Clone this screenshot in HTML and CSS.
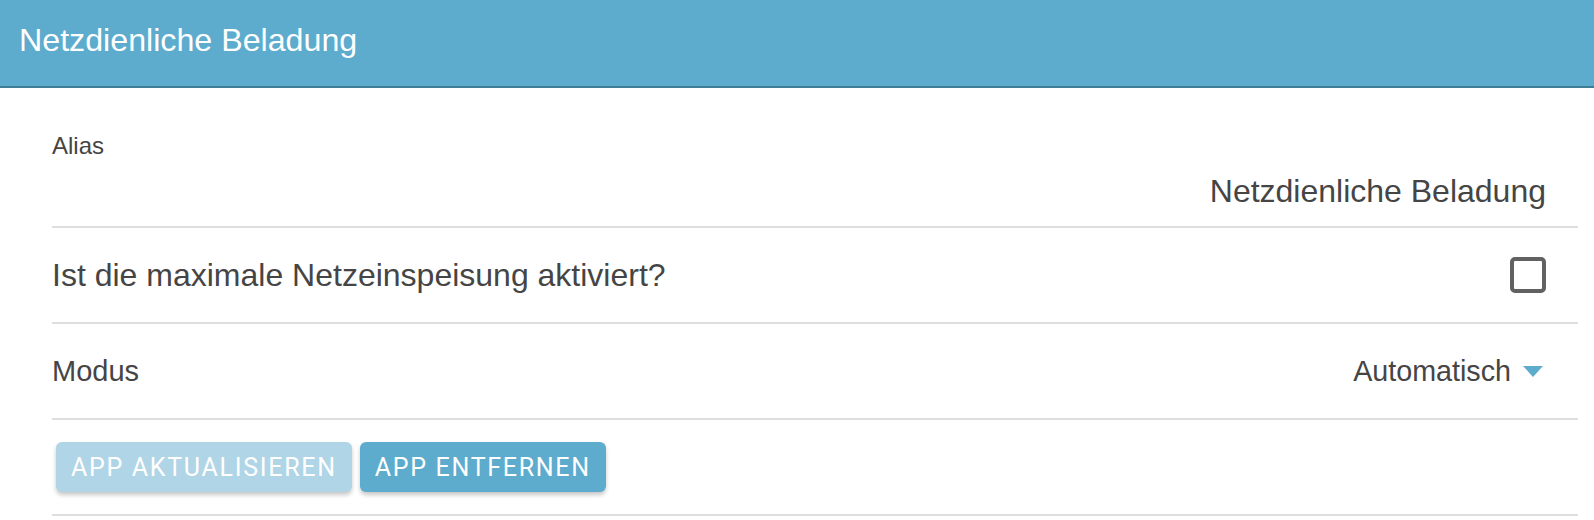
FILE: index.html
```html
<!DOCTYPE html>
<html lang="de">
<head>
    <meta charset="UTF-8">
    <meta name="viewport" content="width=device-width, initial-scale=1.0">
    <title>Netzdienliche Beladung</title>
    <link rel="stylesheet" href="styles.css">
</head>
<body>
    <header class="toolbar">
        <h1 class="toolbar-title">Netzdienliche Beladung</h1>
    </header>

    <div class="list">
        <div class="item item-stacked">
            <label class="item-label" for="alias">Alias</label>
            <input class="item-input" type="text" id="alias" name="alias" value="Netzdienliche Beladung">
        </div>

        <div class="item">
            <span class="item-text item-text-large">Ist die maximale Netzeinspeisung aktiviert?</span>
            <span class="checkbox"></span>
        </div>

        <div class="item">
            <span class="item-text">Modus</span>
            <div class="select">
                <span class="select-value">Automatisch</span>
                <span class="select-arrow"></span>
            </div>
        </div>

        <div class="item item-buttons">
            <button class="btn btn-disabled" type="button">App aktualisieren</button>
            <button class="btn" type="button">App entfernen</button>
        </div>
    </div>
</body>
</html>
```

FILE: styles.css
```css
body {
    margin: 0;
    padding: 0;
    background: #fff;
    font-family: "Liberation Sans", Arial, sans-serif;
    color: #454545;
}

.toolbar {
    height: 88px;
    box-sizing: border-box;
    background-color: #5dabcd;
    border-bottom: 2px solid #3f7d96;
    padding: 22px 19px 0;
}

.toolbar-title {
    margin: 0;
    font-size: 32.2px;
    font-weight: normal;
    line-height: 36px;
    color: #fff;
}

.list {
    margin: 0 16px 0 52px;
}

.item {
    display: flex;
    align-items: center;
    justify-content: space-between;
    min-height: 94px;
    padding-right: 32px;
    border-bottom: 2px solid #dedede;
}

.item-stacked {
    flex-direction: column;
    align-items: stretch;
    justify-content: flex-start;
    min-height: 0;
    padding-top: 44px;
    padding-bottom: 15px;
}

.item-label {
    font-size: 24px;
    line-height: 28px;
    margin-bottom: 11px;
}

.item-input {
    height: 40px;
    border: none;
    outline: none;
    padding: 0;
    font-family: inherit;
    font-size: 32px;
    line-height: 40px;
    color: #454545;
    text-align: right;
    background: transparent;
}

.item-text {
    font-size: 29px;
}

.item-text-large {
    font-size: 32px;
}

.checkbox {
    width: 36px;
    height: 36px;
    box-sizing: border-box;
    border: 4px solid #616161;
    border-radius: 5px;
}

.select {
    display: flex;
    align-items: center;
}

.select-value {
    font-size: 28.7px;
}

.select-arrow {
    width: 0;
    height: 0;
    margin-left: 12px;
    margin-right: 3px;
    border-left: 10px solid transparent;
    border-right: 10px solid transparent;
    border-top: 11px solid #5dabcd;
}

.item-buttons {
    justify-content: flex-start;
    gap: 8px;
    padding-left: 4px;
}

.btn {
    height: 50px;
    padding: 0 15px;
    border: none;
    border-radius: 6px;
    background-color: #5dabcd;
    color: #fff;
    font-family: Roboto, "Liberation Sans", sans-serif;
    font-size: 25px;
    font-weight: 400;
    letter-spacing: 1.7px;
    text-transform: uppercase;
    box-shadow: 0 3px 4px rgba(0, 0, 0, 0.22);
    cursor: pointer;
}

.btn-disabled {
    background-color: #afd5e6;
}
```
